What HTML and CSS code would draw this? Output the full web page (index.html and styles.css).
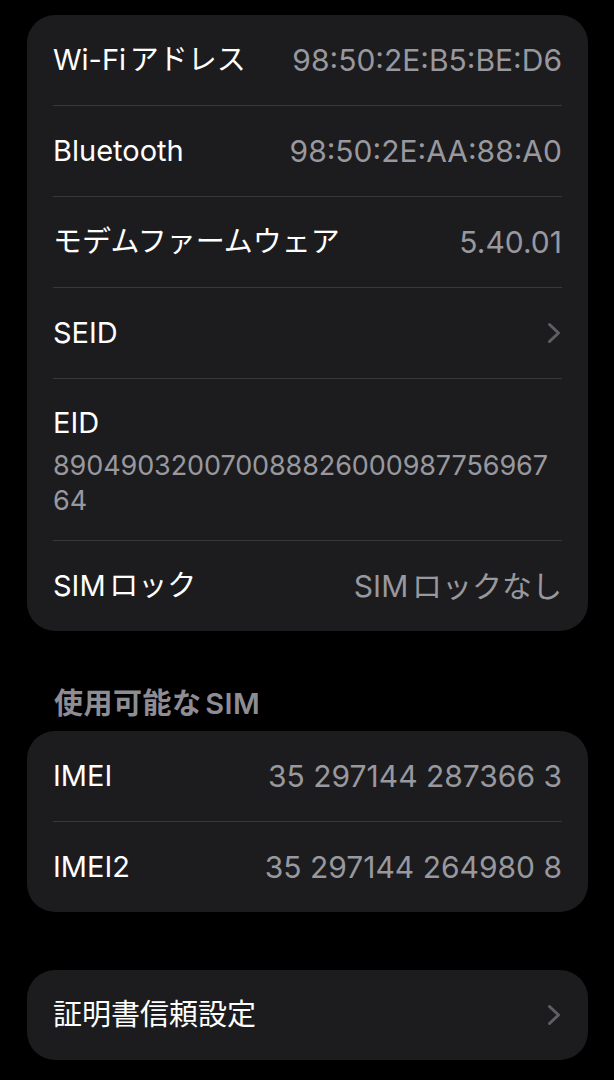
FILE: index.html
```html
<!DOCTYPE html>
<html lang="ja">
<head>
<meta charset="utf-8">
<title>情報</title>
<link rel="stylesheet" href="styles.css">
</head>
<body>
<main class="page">
  <section class="card card-first">
    <div class="row"><span class="label">Wi-Fiアドレス</span><span class="value">98:50:2E:B5:BE:D6</span></div>
    <div class="row"><span class="label">Bluetooth</span><span class="value">98:50:2E:AA:88:A0</span></div>
    <div class="row"><span class="label">モデムファームウェア</span><span class="value">5.40.01</span></div>
    <div class="row"><span class="label">SEID</span>
      <svg class="chevron" viewBox="0 0 14 22" width="14" height="22" aria-hidden="true"><polyline points="2.5,2.5 11.5,11 2.5,19.5" /></svg>
    </div>
    <div class="row row-stack"><span class="label">EID</span><span class="value value-block">89049032007008882600098775696764</span></div>
    <div class="row"><span class="label">SIMロック</span><span class="value">SIMロックなし</span></div>
  </section>

  <h2 class="section-title">使用可能なSIM</h2>
  <section class="card">
    <div class="row"><span class="label">IMEI</span><span class="value">35 297144 287366 3</span></div>
    <div class="row"><span class="label">IMEI2</span><span class="value">35 297144 264980 8</span></div>
  </section>

  <section class="card card-last">
    <div class="row"><span class="label">証明書信頼設定</span>
      <svg class="chevron" viewBox="0 0 14 22" width="14" height="22" aria-hidden="true"><polyline points="2.5,2.5 11.5,11 2.5,19.5" /></svg>
    </div>
  </section>
</main>
</body>
</html>
```

FILE: styles.css
```css
html, body {
  margin: 0;
  padding: 0;
  background: #000;
}

body {
  font-family: "Inter", "Noto Sans CJK JP", sans-serif;
  font-size: 29px;
  color: #fff;
  -webkit-font-smoothing: antialiased;
  text-autospace: normal;
}

.page {
  padding: 15px 26px 0 27px;
  display: flex;
  flex-direction: column;
}

.card {
  background: #1c1c1e;
  border-radius: 28px;
  display: flex;
  flex-direction: column;
}

.card-last {
  margin-top: 58px;
}

.row {
  margin: 0 26px;
  height: 90px;
  display: flex;
  align-items: center;
  justify-content: space-between;
  border-bottom: 1px solid #38383a;
  line-height: 36px;
}

.row:last-child {
  border-bottom: none;
}

.row-stack {
  height: auto;
  flex-direction: column;
  align-items: flex-start;
  justify-content: flex-start;
  padding: 26px 0 22px;
}

.label {
  color: #fff;
  font-size: 29px;
  letter-spacing: 0;
  white-space: nowrap;
}

.value {
  color: #98989f;
  font-size: 30px;
  letter-spacing: 0;
  white-space: nowrap;
}

.value-block {
  font-size: 27px;
  line-height: 35px;
  letter-spacing: -0.1px;
  white-space: normal;
  word-break: break-all;
  margin-top: 7px;
}

.chevron {
  fill: none;
  stroke: #5e5e63;
  stroke-width: 3;
  stroke-linecap: round;
  stroke-linejoin: round;
  margin-right: 1px;
}

.section-title {
  margin: 56px 0 10px 27px;
  font-size: 29px;
  font-weight: 600;
  line-height: 34px;
  color: #8d8d93;
  letter-spacing: 0.5px;
}
```
